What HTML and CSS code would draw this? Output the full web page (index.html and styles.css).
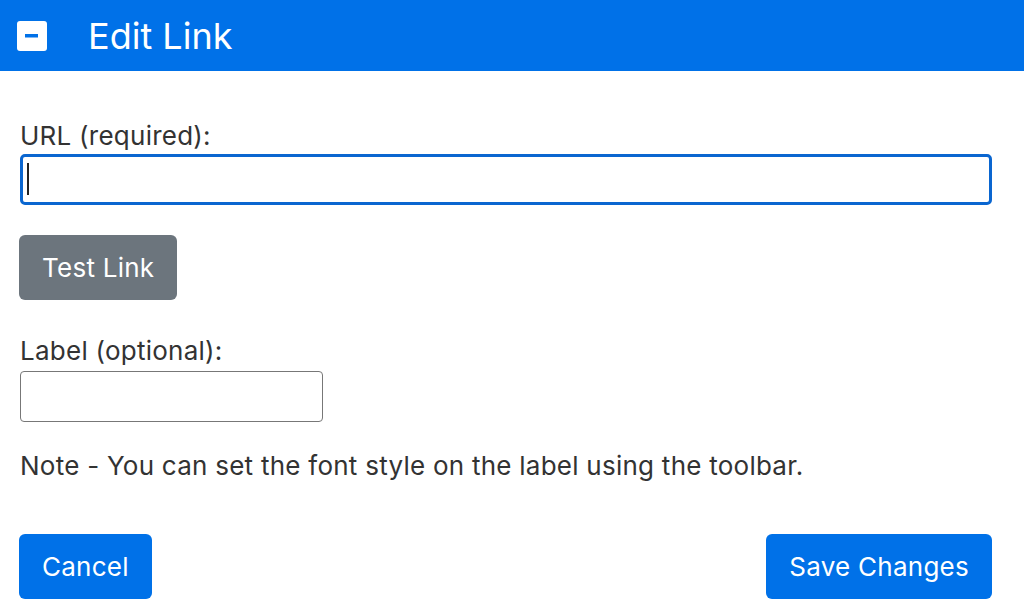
FILE: index.html
```html
<!DOCTYPE html>
<html lang="en">
<head>
    <meta charset="UTF-8">
    <meta name="viewport" content="width=device-width, initial-scale=1.0">
    <title>Edit Link</title>
    <link rel="stylesheet" href="styles.css">
</head>
<body>
    <div class="header">
        <span class="collapse-icon">
            <svg width="30" height="30" viewBox="0 0 30 30">
                <rect x="0" y="0" width="30" height="30" rx="3" fill="#fff"/>
                <rect x="8" y="13" width="13" height="3.5" fill="#0071e8"/>
            </svg>
        </span>
        <h2>Edit Link</h2>
    </div>
    <div class="container">
        <div class="form-group">
            <label for="url">URL (required):</label>
            <div class="input-wrap">
                <input type="text" id="url" class="url-input">
                <span class="caret"></span>
            </div>
        </div>
        <button class="btn btn-gray">Test Link</button>
        <div class="form-group label-group">
            <label for="label">Label (optional):</label>
            <input type="text" id="label" class="label-input">
        </div>
        <p class="note">Note - You can set the font style on the label using the toolbar.</p>
        <div class="actions">
            <button class="btn btn-blue">Cancel</button>
            <button class="btn btn-blue">Save Changes</button>
        </div>
    </div>
</body>
</html>
```

FILE: styles.css
```css
body {
    font-family: Inter, "Liberation Sans", Arial, sans-serif;
    margin: 0;
    color: #333;
    background: #fff;
    letter-spacing: 0.25px;
}
.header {
    display: flex;
    align-items: center;
    height: 71px;
    background-color: #0071e8;
    color: white;
    padding-left: 17px;
}
.collapse-icon {
    display: flex;
    width: 30px;
    height: 30px;
}
.header h2 {
    margin: 0 0 0 41px;
    font-size: 36px;
    font-weight: normal;
    letter-spacing: 0;
}
.container {
    padding: 49px 32px 0 20px;
}
.form-group label {
    display: block;
    font-size: 26px;
    line-height: 32px;
    margin-bottom: 2px;
}
.input-wrap {
    position: relative;
}
.caret {
    position: absolute;
    left: 7px;
    top: 9px;
    width: 2px;
    height: 32px;
    background: #222;
}
input[type="text"] {
    box-sizing: border-box;
    display: block;
    font-family: inherit;
    font-size: 24px;
    padding: 0 6px;
    background: #fff;
}
.url-input {
    width: 100%;
    height: 51px;
    border: 3px solid #0a66d0;
    border-radius: 5px;
    outline: none;
}
.label-input {
    width: 303px;
    height: 51px;
    border: 1px solid #777;
    border-radius: 4px;
    margin-top: 4px;
}
.btn {
    font-family: inherit;
    font-size: 26px;
    letter-spacing: 0.25px;
    color: white;
    border: none;
    border-radius: 6px;
    height: 65px;
    padding: 0 23px;
    cursor: pointer;
}
.btn-gray {
    margin-top: 30px;
    background-color: #6c757d;
    margin-left: -1px;
}
.btn-blue {
    background-color: #0071e8;
}
.label-group {
    margin-top: 35px;
}
.note {
    font-size: 26px;
    margin: 28px 0 0 0;
    line-height: 32px;
}
.actions {
    display: flex;
    justify-content: space-between;
    margin-top: 52px;
    margin-left: -1px;
}
```
